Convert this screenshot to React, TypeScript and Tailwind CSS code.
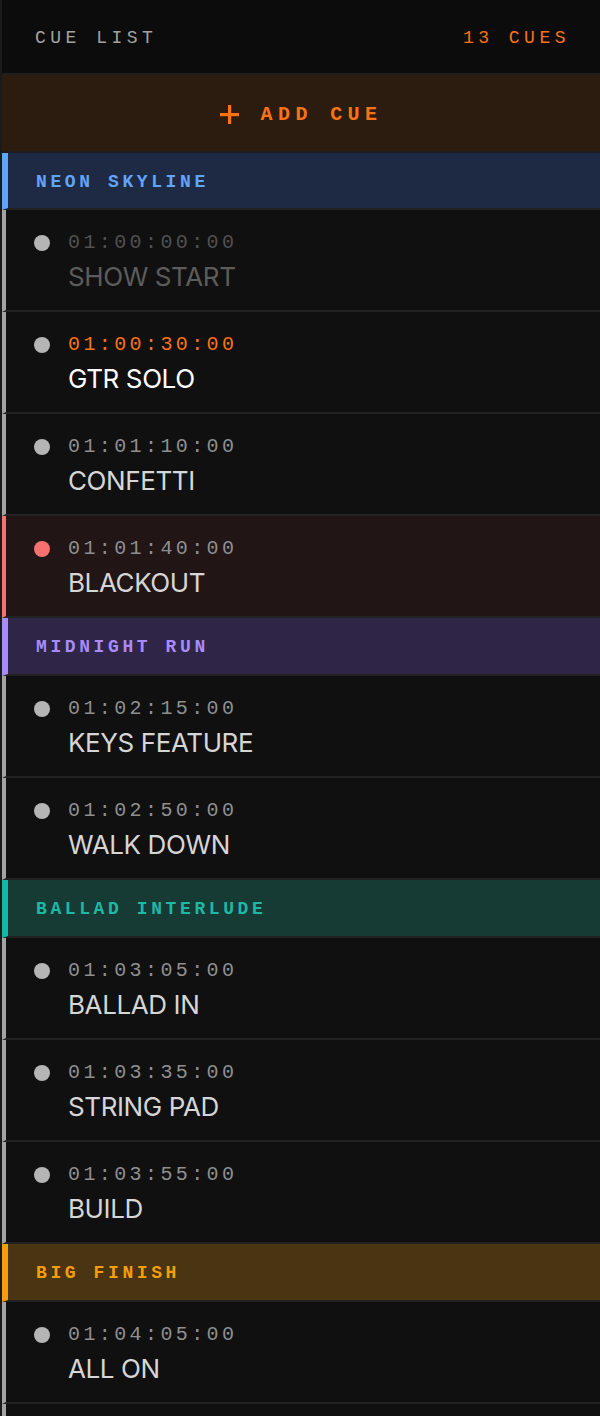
type Cue = {
  tc: string;
  name: string;
  state?: 'past' | 'active' | 'alert';
};

type Section = {
  title: string;
  bg: string;
  strip: string;
  text: string;
  cues: Cue[];
};

const sections: Section[] = [
  {
    title: 'NEON SKYLINE',
    bg: 'bg-[#1e2a44]',
    strip: 'border-[#60a5fa]',
    text: 'text-[#60a5fa]',
    cues: [
      { tc: '01:00:00:00', name: 'SHOW START', state: 'past' },
      { tc: '01:00:30:00', name: 'GTR SOLO', state: 'active' },
      { tc: '01:01:10:00', name: 'CONFETTI' },
      { tc: '01:01:40:00', name: 'BLACKOUT', state: 'alert' },
    ],
  },
  {
    title: 'MIDNIGHT RUN',
    bg: 'bg-[#2f2547]',
    strip: 'border-[#a78bfa]',
    text: 'text-[#a78bfa]',
    cues: [
      { tc: '01:02:15:00', name: 'KEYS FEATURE' },
      { tc: '01:02:50:00', name: 'WALK DOWN' },
    ],
  },
  {
    title: 'BALLAD INTERLUDE',
    bg: 'bg-[#163b35]',
    strip: 'border-[#14b8a6]',
    text: 'text-[#1fb8a4]',
    cues: [
      { tc: '01:03:05:00', name: 'BALLAD IN' },
      { tc: '01:03:35:00', name: 'STRING PAD' },
      { tc: '01:03:55:00', name: 'BUILD' },
    ],
  },
  {
    title: 'BIG FINISH',
    bg: 'bg-[#4a3412]',
    strip: 'border-[#f59e0b]',
    text: 'text-[#f59e0b]',
    cues: [
      { tc: '01:04:05:00', name: 'ALL ON' },
      { tc: '01:04:30:00', name: 'PYRO' },
      { tc: '01:04:50:00', name: 'BOWS' },
      { tc: '01:05:10:00', name: 'HOUSE LIGHTS' },
    ],
  },
];

const mono = "font-['Liberation_Mono','DejaVu_Sans_Mono',monospace]";

function CueRow({ cue }: { cue: Cue }) {
  const alert = cue.state === 'alert';
  const tcColor =
    cue.state === 'active' ? 'text-[#f97316]' : cue.state === 'past' ? 'text-[#505050]' : 'text-[#8f8f8f]';
  const nameColor =
    cue.state === 'active' ? 'text-white' : cue.state === 'past' ? 'text-[#5c5c5c]' : 'text-[#d6d6d6]';

  return (
    <div
      className={`h-[102px] border-l-4 border-b-2 border-b-[#222222] pl-[28px] pt-[21px] flex gap-[18px] ${
        alert ? 'bg-[#221516] border-l-[#f87171]' : 'bg-[#101010] border-l-[#a3a3a3]'
      }`}
    >
      <div className="h-[24px] flex items-center">
        <span className={`block w-4 h-4 rounded-full ${alert ? 'bg-[#f87171]' : 'bg-[#b5b5b5]'}`} />
      </div>
      <div className="flex flex-col">
        <span className={`${mono} text-[20px] leading-[24px] tracking-[3.4px] ${tcColor}`}>{cue.tc}</span>
        <span className={`font-['Inter',sans-serif] text-[26px] leading-[32px] mt-[6px] tracking-[-0.4px] ${nameColor}`}>
          {cue.name}
        </span>
      </div>
    </div>
  );
}

export default function App() {
  const total = sections.reduce((n, s) => n + s.cues.length, 0);

  return (
    <div className="w-[600px] h-[1416px] overflow-hidden bg-[#0c0c0c] border-l-2 border-[#1a1a1a]">
      <div className={`h-[75px] border-b-2 border-[#1e1e1e] flex items-center justify-between pt-[4px] pl-[33px] pr-[30px] ${mono} text-[18px] tracking-[4.5px]`}>
        <span className="text-[#a3a3a3]">CUE LIST</span>
        <span className="text-[#f97316]">{total} CUES</span>
      </div>

      <button className="w-full h-[78px] bg-[#2c1b0f] border-b-2 border-[#1c1c1c] flex items-center justify-center gap-[22px] pt-[4px] text-[#f97316]">
        <svg width="19" height="19" viewBox="0 0 19 19" fill="currentColor" className="-mt-[2px]">
          <rect x="8" y="0" width="3.2" height="19" />
          <rect x="0" y="8" width="19" height="3.2" />
        </svg>
        <span className={`${mono} font-bold text-[20px] tracking-[5.4px]`}>ADD CUE</span>
      </button>

      {sections.map((s, i) => (
        <div key={s.title}>
          <div
            className={`${i === 0 ? 'h-[57px]' : 'h-[58px]'} border-l-[6px] border-b-2 border-b-[#222222] ${s.bg} ${s.strip} flex items-center pt-[3px] pl-[28px]`}
          >
            <span className={`${mono} font-bold text-[18px] tracking-[3.6px] ${s.text}`}>{s.title}</span>
          </div>
          {s.cues.map((c) => (
            <CueRow key={c.tc} cue={c} />
          ))}
        </div>
      ))}
    </div>
  );
}
